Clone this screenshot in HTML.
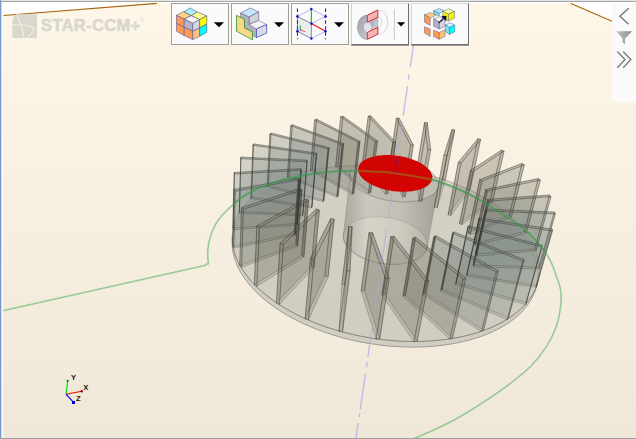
<!DOCTYPE html>
<html><head><meta charset="utf-8"><title>STAR-CCM+ scene</title>
<style>
html,body{margin:0;padding:0;background:#fff;}
body{width:636px;height:439px;overflow:hidden;font-family:"Liberation Sans",sans-serif;}
#scene{position:relative;width:636px;height:439px;overflow:hidden;}
#view{position:absolute;left:0;top:0;}
.b{stroke:none;}
.e{stroke:rgb(40,40,36);stroke-opacity:0.36;stroke-width:0.7;stroke-linejoin:round;}
.e:not(.t){fill:none;}
.e.t{fill-opacity:0.35;}
.e.t.i{fill-opacity:0.45;}
.basebot{fill:rgb(170,170,160);fill-opacity:0.2;stroke:rgb(60,60,60);stroke-opacity:0.5;stroke-width:0.7;}
.baseside{fill:rgb(205,203,192);fill-opacity:0.9;stroke:rgb(90,90,85);stroke-opacity:0.5;stroke-width:0.6;}
.basetop{fill:rgb(175,176,165);fill-opacity:0.35;stroke:rgb(60,60,60);stroke-opacity:0.5;stroke-width:0.7;}
.hubside{fill:url(#hubg);fill-opacity:0.55;stroke:rgb(80,80,80);stroke-opacity:0.3;stroke-width:0.6;}
.hubback{fill:rgb(150,150,140);fill-opacity:0.4;stroke:none;}
.hubbot{fill:none;stroke:rgb(60,60,60);stroke-opacity:0.5;stroke-width:0.7;}
.hubtop{fill:rgb(200,198,190);fill-opacity:0.3;stroke:rgb(80,80,80);stroke-opacity:0.4;stroke-width:0.6;}
.red{fill:#d20303;stroke:none;}
.frameL{position:absolute;left:0;top:0;width:1px;height:439px;background:#7b9cc4;border-right:1px solid #c9d6e6;}
.frameL2{position:absolute;left:2px;top:0;width:1px;height:439px;background:#fff;}
.frameT{position:absolute;left:1px;top:0;width:635px;height:1px;background:#e4e4e4;border-bottom:1px solid #a6a6a6;}
.frameT2{position:absolute;left:3px;top:2px;width:633px;height:1px;background:#fff;}
.frameB{position:absolute;left:0;top:438px;width:636px;height:1px;background:#a0a0a0;}
#logotext{position:absolute;left:41px;top:16.3px;-webkit-text-stroke:0.6px #d9d8cf;font-family:"Liberation Sans",sans-serif;font-weight:bold;font-size:16.5px;line-height:19px;color:#d9d8cf;letter-spacing:0.35px;white-space:nowrap;}
#logoreg{position:absolute;left:140px;top:17px;font-family:"Liberation Sans",sans-serif;font-size:6px;line-height:7px;color:#dddcd3;}
.tb{position:absolute;top:3px;width:56px;height:40px;background:#fafafa;}
.tb.flat{border:1px solid #9e9e9e;}
.tb.raised{border-top:1px solid #d4d4d4;border-left:1px solid #d4d4d4;border-right:1px solid #6e6e6e;border-bottom:1px solid #6e6e6e;box-shadow:0 1px 0 #9a9a9a;}
#rpanel{position:absolute;left:612px;top:3px;width:24px;height:99px;background:#fafafa;}

</style></head>
<body>
<div id="scene">
<svg id="view" width="636" height="439" viewBox="0 0 636 439">
<defs>
<linearGradient id="bg" x1="0" y1="0" x2="0" y2="1"><stop offset="0" stop-color="#fef6e6"/><stop offset="1" stop-color="#efe8d9"/></linearGradient>
<linearGradient id="hubg" gradientUnits="userSpaceOnUse" x1="344" y1="0" x2="438" y2="0">
<stop offset="0" stop-color="#9c9b93"/><stop offset="0.25" stop-color="#d8d6cc"/><stop offset="0.6" stop-color="#c9c7bd"/><stop offset="1" stop-color="#8f8e86"/></linearGradient>
<clipPath id="notred"><path clip-rule="evenodd" d="M0,0 H636 V439 H0 Z M432.2,176.1 L432.3,177.0 L432.3,178.0 L432.2,178.9 L432.0,179.8 L431.6,180.8 L431.2,181.6 L430.7,182.5 L430.0,183.3 L429.3,184.2 L428.5,184.9 L427.5,185.7 L426.5,186.4 L425.4,187.1 L424.2,187.7 L422.9,188.3 L421.5,188.9 L420.0,189.4 L418.5,189.9 L416.9,190.3 L415.2,190.6 L413.4,191.0 L411.7,191.2 L409.8,191.4 L407.9,191.6 L406.0,191.7 L404.0,191.7 L402.0,191.7 L400.0,191.7 L398.0,191.6 L396.0,191.4 L393.9,191.2 L391.9,190.9 L389.9,190.5 L387.9,190.2 L385.9,189.7 L383.9,189.2 L382.0,188.7 L380.1,188.1 L378.3,187.5 L376.5,186.8 L374.8,186.1 L373.1,185.4 L371.5,184.6 L370.0,183.8 L368.6,183.0 L367.2,182.1 L366.0,181.2 L364.8,180.3 L363.7,179.4 L362.7,178.5 L361.8,177.5 L360.9,176.5 L360.2,175.6 L359.6,174.6 L359.1,173.6 L358.7,172.6 L358.4,171.7 L358.2,170.7 L358.1,169.8 L358.1,168.8 L358.3,167.9 L358.5,167.0 L358.8,166.1 L359.2,165.2 L359.7,164.4 L360.3,163.5 L361.0,162.8 L361.8,162.0 L362.7,161.3 L363.7,160.6 L364.7,159.9 L365.9,159.3 L367.1,158.7 L368.3,158.2 L369.7,157.7 L371.1,157.2 L372.6,156.8 L374.1,156.4 L375.7,156.1 L377.3,155.8 L379.0,155.5 L380.7,155.4 L382.5,155.2 L384.3,155.1 L386.1,155.1 L387.9,155.1 L389.8,155.1 L391.6,155.2 L393.5,155.3 L395.4,155.5 L397.3,155.7 L399.1,156.0 L401.0,156.3 L402.9,156.7 L404.7,157.1 L406.5,157.6 L408.3,158.1 L410.0,158.6 L411.8,159.2 L413.4,159.8 L415.0,160.4 L416.6,161.1 L418.1,161.8 L419.6,162.6 L421.0,163.3 L422.3,164.1 L423.6,165.0 L424.8,165.8 L425.9,166.7 L427.0,167.6 L427.9,168.5 L428.8,169.4 L429.6,170.3 L430.2,171.3 L430.8,172.2 L431.3,173.2 L431.7,174.2 L432.0,175.1 L432.2,176.1 Z"/></clipPath>
<clipPath id="fanclip"><polygon points="553.0,228.1 535.6,289.4 533.2,295.5 530.0,301.4 525.9,307.1 520.9,312.7 515.1,317.9 508.5,322.8 501.0,327.4 492.7,331.6 483.6,335.4 473.9,338.7 463.5,341.4 452.5,343.7 441.0,345.4 429.1,346.5 416.8,347.0 404.3,346.9 391.6,346.2 378.9,344.8 366.3,342.9 353.8,340.4 341.5,337.4 329.6,333.8 318.1,329.8 307.1,325.3 296.7,320.3 287.0,315.1 277.9,309.4 269.6,303.6 262.1,297.5 255.4,291.2 249.6,284.7 244.6,278.2 240.4,271.7 237.1,265.1 234.7,258.6 233.1,252.2 232.3,245.9 232.3,239.7 233.7,178.4 234.5,172.8 236.0,167.4 238.3,162.2 241.3,157.3 244.9,152.5 249.2,148.1 254.0,143.9 259.4,140.0 265.3,136.3 271.6,133.0 278.4,129.9 285.6,127.2 293.2,124.7 301.1,122.6 309.3,120.7 317.8,119.2 326.5,117.9 335.4,116.9 344.4,116.3 353.7,115.9 363.0,115.8 372.4,116.1 382.0,116.6 391.5,117.4 401.1,118.5 410.6,119.9 420.1,121.5 429.5,123.5 438.8,125.7 448.0,128.1 457.1,130.9 466.0,133.9 474.6,137.2 483.0,140.7 491.1,144.5 498.9,148.5 506.4,152.7 513.5,157.2 520.1,161.8 526.3,166.7 532.0,171.7 537.2,177.0 541.8,182.3 545.7,187.8 549.0,193.5 551.6,199.2 553.5,204.9 554.6,210.8 554.9,216.6 554.4,222.4"/></clipPath>
<clipPath id="redclip"><polygon points="432.2,176.1 432.3,177.0 432.3,178.0 432.2,178.9 432.0,179.8 431.6,180.8 431.2,181.6 430.7,182.5 430.0,183.3 429.3,184.2 428.5,184.9 427.5,185.7 426.5,186.4 425.4,187.1 424.2,187.7 422.9,188.3 421.5,188.9 420.0,189.4 418.5,189.9 416.9,190.3 415.2,190.6 413.4,191.0 411.7,191.2 409.8,191.4 407.9,191.6 406.0,191.7 404.0,191.7 402.0,191.7 400.0,191.7 398.0,191.6 396.0,191.4 393.9,191.2 391.9,190.9 389.9,190.5 387.9,190.2 385.9,189.7 383.9,189.2 382.0,188.7 380.1,188.1 378.3,187.5 376.5,186.8 374.8,186.1 373.1,185.4 371.5,184.6 370.0,183.8 368.6,183.0 367.2,182.1 366.0,181.2 364.8,180.3 363.7,179.4 362.7,178.5 361.8,177.5 360.9,176.5 360.2,175.6 359.6,174.6 359.1,173.6 358.7,172.6 358.4,171.7 358.2,170.7 358.1,169.8 358.1,168.8 358.3,167.9 358.5,167.0 358.8,166.1 359.2,165.2 359.7,164.4 360.3,163.5 361.0,162.8 361.8,162.0 362.7,161.3 363.7,160.6 364.7,159.9 365.9,159.3 367.1,158.7 368.3,158.2 369.7,157.7 371.1,157.2 372.6,156.8 374.1,156.4 375.7,156.1 377.3,155.8 379.0,155.5 380.7,155.4 382.5,155.2 384.3,155.1 386.1,155.1 387.9,155.1 389.8,155.1 391.6,155.2 393.5,155.3 395.4,155.5 397.3,155.7 399.1,156.0 401.0,156.3 402.9,156.7 404.7,157.1 406.5,157.6 408.3,158.1 410.0,158.6 411.8,159.2 413.4,159.8 415.0,160.4 416.6,161.1 418.1,161.8 419.6,162.6 421.0,163.3 422.3,164.1 423.6,165.0 424.8,165.8 425.9,166.7 427.0,167.6 427.9,168.5 428.8,169.4 429.6,170.3 430.2,171.3 430.8,172.2 431.3,173.2 431.7,174.2 432.0,175.1 432.2,176.1"/></clipPath>
</defs>
<rect x="0" y="0" width="636" height="439" fill="#ffffff"/>
<polygon points="3,15.6 157,3 571,3 612,21.5 636,30 636,439 3,439" fill="url(#bg)"/>
<path d="M3.5,15.5 L157,3.4 M571,3.4 L612,21.3" stroke="#a8660f" stroke-width="1.1" fill="none"/>
<g id="fan">
<polygon points="535.3,258.4 536.0,260.7 536.5,263.0 537.0,265.3 537.4,267.7 537.7,270.0 537.8,272.3 537.9,274.6 537.8,276.9 537.7,279.3 537.4,281.6 537.0,283.9 536.5,286.2 535.9,288.5 535.2,290.7 534.3,293.0 533.3,295.2 532.3,297.5 531.0,299.7 529.7,301.8 528.3,304.0 526.7,306.1 525.0,308.2 523.2,310.3 521.3,312.3 519.2,314.3 517.1,316.3 514.8,318.2 512.4,320.1 509.9,321.9 507.2,323.7 504.5,325.4 501.6,327.1 498.7,328.7 495.6,330.2 492.4,331.8 489.1,333.2 485.7,334.6 482.2,335.9 478.6,337.2 474.9,338.3 471.1,339.5 467.3,340.5 463.3,341.5 459.3,342.4 455.2,343.2 451.0,343.9 446.8,344.6 442.4,345.2 438.1,345.7 433.6,346.1 429.2,346.5 424.6,346.7 420.1,346.9 415.4,347.0 410.8,347.0 406.1,346.9 401.4,346.8 396.7,346.5 392.0,346.2 387.3,345.8 382.5,345.3 377.8,344.7 373.1,344.0 368.4,343.3 363.7,342.5 359.0,341.6 354.4,340.6 349.8,339.5 345.2,338.4 340.7,337.2 336.2,335.9 331.8,334.5 327.5,333.1 323.2,331.6 318.9,330.1 314.8,328.5 310.7,326.8 306.7,325.1 302.7,323.3 298.9,321.4 295.1,319.5 291.4,317.6 287.9,315.6 284.4,313.5 281.0,311.4 277.7,309.3 274.5,307.1 271.5,304.9 268.5,302.7 265.7,300.4 262.9,298.2 260.3,295.8 257.8,293.5 255.4,291.1 253.1,288.8 251.0,286.4 248.9,284.0 247.0,281.5 245.2,279.1 243.5,276.7 241.9,274.2 240.5,271.8 239.2,269.4 237.9,266.9 236.9,264.5 235.9,262.1 235.0,259.6 234.3,257.2 233.6,254.8 233.1,252.4 232.7,250.1 232.4,247.7 232.3,245.4 232.2,243.0 232.2,240.7 232.4,238.5 232.6,236.2 233.0,234.0 233.4,231.8 234.0,229.6 234.6,227.5 235.4,225.4 236.2,223.3 237.2,221.2 238.2,219.2 239.3,217.2 240.5,215.3 241.8,213.3 243.2,211.5 244.7,209.6 246.2,207.8 247.8,206.0 249.5,204.3 251.3,202.6 253.1,201.0 255.1,199.4 257.0,197.8 259.1,196.3 261.2,194.8 263.4,193.3 265.7,191.9 268.0,190.6 270.3,189.3 272.8,188.0 275.2,186.8 277.8,185.6 280.4,184.4 283.0,183.3 285.7,182.3 288.4,181.3 291.2,180.3 294.0,179.4 296.9,178.5 299.8,177.7 302.7,176.9 305.7,176.1 308.7,175.4 311.7,174.8 314.8,174.2 317.9,173.6 321.0,173.1 324.2,172.6 327.4,172.2 330.6,171.8 333.8,171.5 337.1,171.2 340.4,170.9 343.7,170.7 347.0,170.6 350.3,170.5 353.7,170.4 357.0,170.4 360.4,170.4 363.8,170.4 367.1,170.5 370.5,170.7 373.9,170.9 377.4,171.1 380.8,171.4 384.2,171.7 387.6,172.1 391.0,172.5 394.4,173.0 397.8,173.5 401.2,174.0 404.6,174.6 408.0,175.2 411.4,175.9 414.7,176.6 418.1,177.3 421.4,178.1 424.8,179.0 428.1,179.8 431.4,180.8 434.7,181.7 437.9,182.7 441.2,183.8 444.4,184.8 447.5,186.0 450.7,187.1 453.8,188.3 456.9,189.6 460.0,190.8 463.0,192.1 466.0,193.5 469.0,194.9 471.9,196.3 474.8,197.8 477.7,199.3 480.5,200.8 483.3,202.4 486.0,204.0 488.6,205.7 491.3,207.3 493.8,209.1 496.3,210.8 498.8,212.6 501.2,214.4 503.6,216.2 505.8,218.1 508.1,220.0 510.2,221.9 512.3,223.9 514.3,225.9 516.3,227.9 518.2,230.0 520.0,232.0 521.7,234.1 523.4,236.2 525.0,238.4 526.5,240.5 527.9,242.7 529.2,244.9 530.4,247.1 531.6,249.4 532.7,251.6 533.6,253.9 534.5,256.1 535.3,258.4" class="basebot"/>
<polygon points="537.5,282.8 536.9,284.7 536.2,286.6 535.5,288.5 534.6,290.4 533.7,292.3 532.6,294.2 531.5,296.1 530.3,297.9 529.0,299.7 527.6,301.5 526.2,303.3 524.6,305.1 523.0,306.8 521.2,308.5 519.4,310.2 517.5,311.8 515.5,313.4 513.4,315.0 511.2,316.6 509.0,318.1 506.6,319.6 504.2,321.0 501.7,322.4 499.1,323.8 496.4,325.1 493.7,326.4 490.9,327.6 488.0,328.8 485.0,329.9 481.9,331.0 478.8,332.1 475.6,333.1 472.4,334.0 469.1,334.9 465.7,335.7 462.2,336.5 458.7,337.3 455.2,337.9 451.6,338.5 447.9,339.1 444.2,339.6 440.4,340.1 436.7,340.4 432.8,340.8 428.9,341.0 425.0,341.2 421.1,341.4 417.1,341.4 413.2,341.5 409.1,341.4 405.1,341.3 401.1,341.1 397.0,340.9 393.0,340.6 388.9,340.3 384.8,339.9 380.7,339.4 376.7,338.9 372.6,338.3 368.6,337.6 364.5,336.9 360.5,336.1 356.5,335.3 352.6,334.4 348.6,333.5 344.7,332.5 340.8,331.5 337.0,330.4 333.2,329.2 329.4,328.0 325.7,326.8 322.0,325.5 318.4,324.1 314.8,322.7 311.3,321.3 307.8,319.8 304.4,318.3 301.1,316.7 297.8,315.1 294.6,313.5 291.4,311.8 288.4,310.1 285.4,308.4 282.4,306.6 279.6,304.8 276.8,303.0 274.1,301.1 271.5,299.2 268.9,297.3 266.5,295.4 264.1,293.4 261.8,291.5 259.6,289.5 257.5,287.5 255.4,285.5 253.5,283.4 251.6,281.4 249.8,279.4 248.1,277.3 246.5,275.2 245.0,273.2 243.5,271.1 242.2,269.0 240.9,266.9 239.8,264.8 238.7,262.8 237.7,260.7 236.8,258.6 235.9,256.5 235.2,254.5 234.5,252.4 234.0,250.4 233.5,248.3 233.1,246.3 232.8,244.3 232.5,242.3 232.4,240.3 232.3,238.3 232.3,236.4 232.2,241.6 232.2,243.5 232.3,245.5 232.4,247.5 232.7,249.5 233.0,251.6 233.4,253.6 233.9,255.6 234.4,257.7 235.1,259.8 235.8,261.8 236.6,263.9 237.5,266.0 238.5,268.1 239.6,270.2 240.8,272.3 242.0,274.4 243.4,276.5 244.8,278.5 246.3,280.6 247.9,282.7 249.6,284.8 251.4,286.8 253.2,288.9 255.2,290.9 257.2,292.9 259.3,294.9 261.5,296.9 263.8,298.9 266.2,300.9 268.6,302.8 271.2,304.7 273.8,306.6 276.5,308.5 279.2,310.3 282.1,312.1 285.0,313.9 288.0,315.6 291.0,317.3 294.2,319.0 297.3,320.7 300.6,322.3 303.9,323.8 307.3,325.3 310.8,326.8 314.3,328.3 317.8,329.7 321.4,331.0 325.1,332.3 328.8,333.6 332.5,334.8 336.3,335.9 340.1,337.0 344.0,338.1 347.9,339.1 351.8,340.0 355.8,340.9 359.8,341.7 363.7,342.5 367.8,343.2 371.8,343.8 375.8,344.4 379.9,345.0 383.9,345.4 388.0,345.8 392.0,346.2 396.1,346.5 400.1,346.7 404.1,346.9 408.1,347.0 412.1,347.0 416.1,347.0 420.0,346.9 423.9,346.8 427.8,346.6 431.7,346.3 435.5,346.0 439.3,345.6 443.0,345.1 446.7,344.6 450.4,344.1 453.9,343.4 457.5,342.8 461.0,342.0 464.4,341.2 467.8,340.4 471.1,339.5 474.3,338.5 477.5,337.5 480.6,336.5 483.6,335.4 486.6,334.2 489.5,333.0 492.3,331.8 495.0,330.5 497.7,329.2 500.3,327.8 502.8,326.4 505.2,325.0 507.5,323.5 509.8,321.9 511.9,320.4 514.0,318.8 516.0,317.2 517.9,315.5 519.8,313.8 521.5,312.1 523.1,310.4 524.7,308.6 526.2,306.8 527.5,305.0 528.8,303.2 530.0,301.3 531.2,299.5 532.2,297.6 533.1,295.7 534.0,293.8 534.8,291.8 535.5,289.9 536.0,287.9" class="baseside"/>
<polygon points="536.7,253.4 537.4,255.7 537.9,258.0 538.4,260.3 538.8,262.6 539.1,264.9 539.3,267.2 539.3,269.5 539.3,271.8 539.1,274.1 538.9,276.4 538.5,278.7 538.0,281.0 537.4,283.3 536.6,285.5 535.8,287.8 534.8,290.0 533.7,292.2 532.5,294.4 531.2,296.6 529.8,298.7 528.2,300.9 526.5,302.9 524.7,305.0 522.8,307.0 520.7,309.0 518.5,310.9 516.2,312.8 513.8,314.7 511.3,316.5 508.7,318.3 505.9,320.0 503.0,321.7 500.1,323.3 497.0,324.8 493.8,326.3 490.5,327.8 487.1,329.2 483.5,330.5 479.9,331.7 476.2,332.9 472.5,334.0 468.6,335.0 464.6,336.0 460.6,336.9 456.4,337.7 452.2,338.4 448.0,339.1 443.6,339.7 439.2,340.2 434.8,340.6 430.3,340.9 425.7,341.2 421.1,341.4 416.5,341.4 411.8,341.5 407.1,341.4 402.4,341.2 397.7,341.0 392.9,340.6 388.2,340.2 383.4,339.7 378.7,339.1 373.9,338.5 369.2,337.7 364.5,336.9 359.8,336.0 355.2,335.0 350.5,334.0 345.9,332.8 341.4,331.6 336.9,330.3 332.5,329.0 328.1,327.6 323.8,326.1 319.5,324.5 315.3,322.9 311.2,321.2 307.2,319.5 303.2,317.7 299.3,315.9 295.5,314.0 291.9,312.0 288.3,310.0 284.8,308.0 281.4,305.9 278.1,303.8 274.9,301.6 271.8,299.5 268.8,297.2 266.0,295.0 263.2,292.7 260.6,290.4 258.0,288.1 255.6,285.7 253.4,283.3 251.2,281.0 249.1,278.6 247.2,276.1 245.4,273.7 243.7,271.3 242.1,268.9 240.7,266.4 239.3,264.0 238.1,261.6 237.0,259.2 236.0,256.7 235.2,254.3 234.4,251.9 233.8,249.5 233.3,247.2 232.9,244.8 232.6,242.5 232.4,240.1 232.3,237.8 232.3,235.5 232.5,233.3 232.7,231.0 233.1,228.8 233.5,226.6 234.1,224.5 234.8,222.3 235.5,220.2 236.4,218.2 237.3,216.1 238.3,214.1 239.5,212.2 240.7,210.2 242.0,208.3 243.4,206.4 244.8,204.6 246.4,202.8 248.0,201.1 249.7,199.3 251.5,197.7 253.3,196.0 255.3,194.4 257.3,192.9 259.3,191.4 261.4,189.9 263.6,188.5 265.9,187.1 268.2,185.7 270.6,184.4 273.0,183.1 275.5,181.9 278.1,180.7 280.6,179.6 283.3,178.5 286.0,177.5 288.7,176.5 291.5,175.5 294.3,174.6 297.2,173.7 300.1,172.9 303.1,172.1 306.0,171.4 309.1,170.7 312.1,170.1 315.2,169.5 318.3,168.9 321.5,168.4 324.6,167.9 327.8,167.5 331.1,167.1 334.3,166.8 337.6,166.5 340.9,166.3 344.2,166.1 347.5,165.9 350.8,165.8 354.2,165.7 357.6,165.7 360.9,165.7 364.3,165.8 367.7,165.9 371.1,166.1 374.6,166.2 378.0,166.5 381.4,166.8 384.8,167.1 388.2,167.5 391.7,167.9 395.1,168.3 398.5,168.8 401.9,169.4 405.3,169.9 408.7,170.6 412.1,171.2 415.5,171.9 418.9,172.7 422.2,173.5 425.6,174.3 428.9,175.2 432.2,176.1 435.5,177.1 438.8,178.1 442.0,179.1 445.2,180.2 448.4,181.3 451.6,182.4 454.8,183.6 457.9,184.9 461.0,186.1 464.0,187.5 467.0,188.8 470.0,190.2 472.9,191.6 475.9,193.1 478.7,194.6 481.5,196.1 484.3,197.7 487.0,199.3 489.7,200.9 492.4,202.6 494.9,204.3 497.5,206.0 499.9,207.8 502.4,209.6 504.7,211.4 507.0,213.3 509.3,215.2 511.4,217.1 513.5,219.1 515.6,221.0 517.5,223.0 519.4,225.1 521.3,227.1 523.0,229.2 524.7,231.3 526.3,233.4 527.8,235.6 529.2,237.8 530.5,239.9 531.8,242.2 532.9,244.4 534.0,246.6 535.0,248.9 535.9,251.1 536.7,253.4" class="basetop"/>
<polygon points="364.5,165.6 388.0,193.8 395.5,142.2 370.7,115.8" class="b" fill="rgb(131,128,115)" fill-opacity="0.264"/>
<polygon points="391.8,167.7 405.2,196.8 413.4,145.1 399.0,118.1" class="b" fill="rgb(131,128,115)" fill-opacity="0.293"/>
<polygon points="385.4,194.2 362.1,165.9 368.2,116.1 392.9,142.5" class="b" fill="rgb(131,128,115)" fill-opacity="0.264"/>
<polygon points="402.5,196.9 389.2,167.7 396.4,118.1 410.6,145.1" class="b" fill="rgb(131,128,115)" fill-opacity="0.293"/>
<polygon points="337.8,166.3 370.7,192.7 377.5,140.9 343.0,116.2" class="b" fill="rgb(131,128,115)" fill-opacity="0.256"/>
<polygon points="368.4,193.3 335.6,166.8 340.7,116.7 375.2,141.5" class="b" fill="rgb(131,128,115)" fill-opacity="0.256"/>
<polygon points="418.9,201.3 416.3,172.3 424.5,122.5 427.8,149.4" class="b" fill="rgb(131,128,115)" fill-opacity="0.246"/>
<polygon points="418.9,172.5 421.7,201.6 430.7,149.7 427.3,122.8" class="b" fill="rgb(131,128,115)" fill-opacity="0.246"/>
<polygon points="312.3,169.8 353.9,193.4 360.1,141.4 316.6,119.2" class="b" fill="rgb(130,129,117)" fill-opacity="0.248"/>
<polygon points="352.0,194.3 310.4,170.6 314.6,119.9 358.1,142.2" class="b" fill="rgb(130,129,117)" fill-opacity="0.248"/>
<polygon points="434.3,207.3 442.6,179.5 452.0,129.5 443.9,155.2" class="b" fill="rgb(131,128,115)" fill-opacity="0.249"/>
<polygon points="445.3,180.0 437.1,207.9 446.8,155.7 454.7,130.0" class="b" fill="rgb(131,128,115)" fill-opacity="0.249"/>
<polygon points="288.9,176.2 338.2,196.0 343.7,143.6 292.3,124.8" class="b" fill="rgb(128,134,126)" fill-opacity="0.221"/>
<polygon points="336.7,197.1 287.4,177.2 290.7,125.7 342.2,144.6" class="b" fill="rgb(128,134,126)" fill-opacity="0.221"/>
<polygon points="448.0,214.8 467.4,189.2 477.9,138.7 458.3,162.3" class="b" fill="rgb(131,128,115)" fill-opacity="0.242"/>
<polygon points="470.0,190.0 450.7,215.7 461.1,163.1 480.6,139.5" class="b" fill="rgb(131,128,115)" fill-opacity="0.242"/>
<polygon points="268.4,185.3 324.0,200.4 329.1,147.6 271.0,133.0" class="b" fill="rgb(126,137,133)" fill-opacity="0.185"/>
<polygon points="323.0,201.7 267.2,186.6 269.8,134.2 328.0,148.8" class="b" fill="rgb(126,137,133)" fill-opacity="0.185"/>
<polygon points="459.4,223.6 489.9,201.3 501.5,150.1 470.4,170.6" class="b" fill="rgb(131,128,115)" fill-opacity="0.221"/>
<polygon points="492.3,202.3 461.9,224.7 473.0,171.7 504.1,151.1" class="b" fill="rgb(131,128,115)" fill-opacity="0.221"/>
<polygon points="251.6,197.2 312.1,206.5 316.7,153.2 253.6,143.9" class="b" fill="rgb(125,138,135)" fill-opacity="0.166"/>
<polygon points="311.6,208.0 250.9,198.6 252.9,145.2 316.2,154.5" class="b" fill="rgb(125,138,135)" fill-opacity="0.166"/>
<polygon points="468.1,233.3 509.2,215.5 522.0,163.5 479.7,179.7" class="b" fill="rgb(131,128,115)" fill-opacity="0.206"/>
<polygon points="511.4,216.8 470.3,234.7 482.0,181.1 524.3,164.8" class="b" fill="rgb(131,128,115)" fill-opacity="0.206"/>
<polygon points="239.4,211.6 302.8,214.3 307.1,160.3 240.9,157.1" class="b" fill="rgb(125,138,135)" fill-opacity="0.163"/>
<polygon points="302.8,215.9 239.3,213.1 240.8,158.6 307.1,161.7" class="b" fill="rgb(125,138,135)" fill-opacity="0.163"/>
<polygon points="473.6,243.7 524.5,231.5 538.3,178.6 485.6,189.5" class="b" fill="rgb(131,128,116)" fill-opacity="0.199"/>
<polygon points="526.3,233.1 475.4,245.3 487.5,191.0 540.3,180.1" class="b" fill="rgb(131,128,116)" fill-opacity="0.199"/>
<polygon points="232.8,228.1 296.7,223.4 300.8,168.7 234.1,172.5" class="b" fill="rgb(125,138,135)" fill-opacity="0.168"/>
<polygon points="297.4,225.0 233.3,229.8 234.6,174.0 301.5,170.2" class="b" fill="rgb(125,138,135)" fill-opacity="0.168"/>
<polygon points="475.3,254.3 534.7,249.0 549.4,195.0 487.7,199.4" class="b" fill="rgb(128,133,125)" fill-opacity="0.229"/>
<polygon points="343.4,234.7 343.5,233.7 343.7,232.8 344.0,231.9 344.4,231.0 344.8,230.1 345.3,229.3 345.8,228.4 346.4,227.6 347.1,226.8 347.9,226.0 348.7,225.3 349.5,224.5 350.4,223.9 351.4,223.2 352.4,222.5 353.5,221.9 354.7,221.4 355.8,220.8 357.1,220.3 358.3,219.8 359.6,219.4 361.0,219.0 362.4,218.6 363.8,218.2 365.2,217.9 366.7,217.7 368.2,217.4 369.8,217.2 371.3,217.1 372.9,216.9 374.5,216.8 376.1,216.8 377.7,216.8 379.4,216.8 381.0,216.9 382.7,217.0 384.3,217.1 386.0,217.3 387.7,217.5 389.3,217.7 391.0,218.0 392.6,218.3 394.2,218.7 395.9,219.1 397.5,219.5 399.0,219.9 400.6,220.4 402.2,220.9 403.7,221.5 405.2,222.1 406.6,222.7 408.0,223.3 409.4,224.0 410.8,224.7 412.1,225.4 413.4,226.1 414.6,226.9 415.8,227.7 416.9,228.5 418.0,229.3 419.0,230.2 420.0,231.0 420.9,231.9 421.8,232.8 422.6,233.8 423.4,234.7 424.1,235.6 424.7,236.6 425.2,237.5 425.7,238.5 426.2,239.5 426.5,240.5 426.8,241.4 427.0,242.4 427.2,243.4 427.3,244.4 427.3,245.3 427.2,246.3 427.1,247.2 438.3,186.4 438.4,185.5 438.4,184.6 438.4,183.7 438.3,182.8 438.1,181.9 437.9,181.0 437.6,180.1 437.2,179.2 436.7,178.3 436.1,177.4 435.5,176.5 434.9,175.6 434.1,174.7 433.3,173.9 432.4,173.0 431.5,172.2 430.5,171.3 429.5,170.5 428.4,169.7 427.2,168.9 426.0,168.2 424.8,167.4 423.5,166.7 422.1,166.0 420.7,165.3 419.3,164.7 417.8,164.0 416.3,163.4 414.8,162.8 413.2,162.3 411.6,161.8 410.0,161.3 408.4,160.8 406.7,160.4 405.0,160.0 403.3,159.6 401.6,159.3 399.9,159.0 398.1,158.7 396.4,158.4 394.7,158.2 392.9,158.0 391.2,157.9 389.4,157.8 387.7,157.7 386.0,157.7 384.3,157.7 382.6,157.7 380.9,157.8 379.3,157.9 377.7,158.0 376.1,158.2 374.5,158.4 372.9,158.6 371.4,158.9 369.9,159.2 368.5,159.5 367.1,159.9 365.7,160.2 364.4,160.7 363.1,161.1 361.9,161.6 360.8,162.2 359.6,162.7 358.6,163.3 357.6,163.9 356.6,164.5 355.7,165.2 354.9,165.9 354.1,166.6 353.4,167.3 352.8,168.1 352.2,168.8 351.7,169.6 351.3,170.4 350.9,171.3 350.6,172.1 350.4,173.0 350.3,173.8" class="hubback"/><polygon points="427.2,243.3 427.3,244.6 427.2,245.8 427.1,247.0 426.8,248.2 426.5,249.4 426.0,250.6 425.3,251.7 424.6,252.8 423.8,253.9 422.8,254.9 421.7,255.9 420.6,256.9 419.3,257.8 417.9,258.7 416.4,259.5 414.8,260.2 413.1,260.9 411.4,261.6 409.5,262.1 407.6,262.6 405.6,263.1 403.6,263.5 401.5,263.8 399.3,264.0 397.1,264.2 394.9,264.3 392.6,264.3 390.3,264.2 388.0,264.1 385.7,263.9 383.3,263.6 381.0,263.3 378.7,262.9 376.5,262.4 374.2,261.9 372.0,261.3 369.8,260.6 367.7,259.9 365.6,259.1 363.6,258.3 361.7,257.4 359.8,256.4 358.0,255.4 356.3,254.4 354.7,253.3 353.2,252.2 351.8,251.1 350.4,249.9 349.2,248.7 348.1,247.5 347.1,246.3 346.2,245.0 345.5,243.8 344.8,242.5 344.3,241.3 343.8,240.0 343.5,238.7 343.4,237.5 343.3,236.2 343.3,235.0 343.5,233.8 343.8,232.6 344.2,231.5 344.7,230.3 345.3,229.2 346.0,228.1 346.8,227.1 347.8,226.1 348.8,225.2 349.9,224.2 351.1,223.4 352.4,222.6 353.8,221.8 355.3,221.1 356.8,220.4 358.4,219.8 360.1,219.2 361.8,218.7 363.6,218.3 365.5,217.9 367.4,217.5 369.3,217.3 371.3,217.1 373.4,216.9 375.4,216.8 377.5,216.8 379.6,216.8 381.7,216.9 383.8,217.1 385.9,217.3 388.0,217.5 390.1,217.9 392.2,218.2 394.3,218.7 396.4,219.2 398.4,219.7 400.4,220.3 402.4,221.0 404.3,221.7 406.2,222.5 408.0,223.3 409.8,224.1 411.5,225.0 413.1,226.0 414.7,227.0 416.2,228.0 417.6,229.0 418.9,230.1 420.2,231.2 421.3,232.4 422.4,233.5 423.4,234.7 424.2,235.9 425.0,237.1 425.7,238.4 426.2,239.6 426.6,240.8 427.0,242.1 427.2,243.3" class="hubbot"/>
<polygon points="427.1,247.2 426.9,248.1 426.6,249.0 426.3,249.8 425.9,250.7 425.5,251.5 425.0,252.3 424.4,253.1 423.8,253.9 423.1,254.6 422.4,255.3 421.6,256.1 420.7,256.8 419.8,257.4 418.9,258.1 417.9,258.7 416.8,259.3 415.7,259.8 414.5,260.4 413.3,260.9 412.0,261.3 410.7,261.8 409.4,262.2 408.0,262.5 406.6,262.9 405.1,263.2 403.6,263.4 402.1,263.7 400.6,263.9 399.0,264.0 397.4,264.1 395.8,264.2 394.2,264.3 392.5,264.3 390.9,264.3 389.2,264.2 387.5,264.1 385.9,263.9 384.2,263.8 382.5,263.5 380.8,263.3 379.2,263.0 377.5,262.7 375.9,262.3 374.3,261.9 372.7,261.5 371.1,261.0 369.5,260.5 368.0,260.0 366.5,259.4 365.0,258.9 363.6,258.2 362.2,257.6 360.8,256.9 359.5,256.2 358.2,255.5 356.9,254.8 355.7,254.0 354.6,253.2 353.5,252.4 352.4,251.6 351.4,250.8 350.5,249.9 349.6,249.1 348.7,248.2 348.0,247.3 347.2,246.4 346.6,245.5 346.0,244.6 345.4,243.7 345.0,242.8 344.5,241.9 344.2,241.0 343.9,240.1 343.6,239.2 343.5,238.3 343.3,237.4 343.3,236.5 343.3,235.6 343.4,234.7 350.3,173.8 350.2,174.6 350.2,175.5 350.3,176.3 350.4,177.1 350.6,178.0 350.9,178.8 351.2,179.7 351.6,180.5 352.1,181.4 352.6,182.2 353.2,183.1 353.8,183.9 354.5,184.8 355.3,185.6 356.1,186.4 357.0,187.3 358.0,188.1 359.0,188.9 360.0,189.6 361.2,190.4 362.3,191.2 363.5,191.9 364.8,192.6 366.1,193.3 367.5,194.0 368.9,194.7 370.4,195.3 371.8,195.9 373.4,196.5 374.9,197.1 376.5,197.6 378.1,198.1 379.8,198.6 381.5,199.0 383.2,199.4 384.9,199.8 386.6,200.2 388.3,200.5 390.1,200.8 391.8,201.1 393.6,201.3 395.4,201.5 397.1,201.6 398.9,201.7 400.6,201.8 402.4,201.9 404.1,201.9 405.8,201.9 407.5,201.8 409.2,201.7 410.8,201.6 412.5,201.4 414.0,201.2 415.6,201.0 417.1,200.7 418.6,200.4 420.0,200.1 421.4,199.7 422.8,199.3 424.1,198.9 425.4,198.5 426.6,198.0 427.8,197.5 428.9,196.9 429.9,196.4 430.9,195.8 431.8,195.2 432.7,194.5 433.5,193.9 434.3,193.2 435.0,192.5 435.6,191.8 436.2,191.1 436.7,190.3 437.2,189.6 437.5,188.8 437.8,188.0 438.1,187.2 438.3,186.4" class="hubside"/><polygon points="438.3,182.8 438.4,183.9 438.4,185.1 438.3,186.2 438.1,187.3 437.7,188.4 437.2,189.5 436.6,190.6 435.8,191.6 435.0,192.6 434.0,193.5 432.9,194.4 431.7,195.3 430.3,196.1 428.9,196.9 427.3,197.7 425.7,198.3 423.9,199.0 422.1,199.5 420.2,200.1 418.2,200.5 416.1,200.9 414.0,201.2 411.8,201.5 409.5,201.7 407.2,201.8 404.8,201.9 402.4,201.9 400.0,201.8 397.6,201.7 395.2,201.4 392.7,201.2 390.3,200.8 387.9,200.4 385.5,200.0 383.1,199.4 380.8,198.8 378.5,198.2 376.2,197.5 374.0,196.7 371.9,195.9 369.9,195.1 367.9,194.2 366.0,193.3 364.2,192.3 362.5,191.3 360.9,190.2 359.3,189.1 357.9,188.0 356.6,186.9 355.5,185.8 354.4,184.6 353.5,183.5 352.6,182.3 351.9,181.1 351.3,179.9 350.9,178.7 350.5,177.6 350.3,176.4 350.2,175.3 350.3,174.1 350.4,173.0 350.7,171.9 351.1,170.8 351.6,169.8 352.2,168.8 353.0,167.8 353.8,166.9 354.8,166.0 355.8,165.1 357.0,164.2 358.3,163.5 359.6,162.7 361.0,162.0 362.6,161.4 364.2,160.8 365.8,160.2 367.6,159.7 369.4,159.3 371.3,158.9 373.2,158.5 375.2,158.3 377.2,158.0 379.3,157.9 381.4,157.7 383.6,157.7 385.7,157.7 387.9,157.7 390.1,157.8 392.3,158.0 394.6,158.2 396.8,158.5 399.0,158.8 401.2,159.2 403.4,159.6 405.6,160.1 407.7,160.6 409.8,161.2 411.9,161.9 413.9,162.5 415.9,163.3 417.8,164.0 419.7,164.8 421.5,165.7 423.2,166.6 424.9,167.5 426.5,168.4 428.0,169.4 429.4,170.4 430.7,171.5 432.0,172.6 433.1,173.6 434.1,174.8 435.1,175.9 435.9,177.0 436.6,178.2 437.2,179.3 437.7,180.5 438.1,181.6 438.3,182.8" class="hubtop"/>
<g clip-path="url(#notred)">
<polygon points="389.2,167.7 391.8,167.7 399.0,118.1 396.4,118.1" class="e t" fill="rgb(131,128,115)"/>
<polygon points="362.1,165.9 364.5,165.6 370.7,115.8 368.2,116.1" class="e t" fill="rgb(131,128,115)"/>
<polygon points="416.3,172.3 418.9,172.5 427.3,122.8 424.5,122.5" class="e t" fill="rgb(131,128,115)"/>
<polygon points="335.6,166.8 337.8,166.3 343.0,116.2 340.7,116.7" class="e t" fill="rgb(131,128,115)"/>
<polygon points="442.6,179.5 445.3,180.0 454.7,130.0 452.0,129.5" class="e t" fill="rgb(131,128,115)"/>
<polygon points="310.4,170.6 312.3,169.8 316.6,119.2 314.6,119.9" class="e t" fill="rgb(130,129,117)"/>
<polygon points="364.5,165.6 388.0,193.8 395.5,142.2 370.7,115.8" class="e"/>
<polygon points="391.8,167.7 405.2,196.8 413.4,145.1 399.0,118.1" class="e"/>
<polygon points="385.4,194.2 362.1,165.9 368.2,116.1 392.9,142.5" class="e"/>
<polygon points="402.5,196.9 389.2,167.7 396.4,118.1 410.6,145.1" class="e"/>
<polygon points="337.8,166.3 370.7,192.7 377.5,140.9 343.0,116.2" class="e"/>
<polygon points="368.4,193.3 335.6,166.8 340.7,116.7 375.2,141.5" class="e"/>
<polygon points="418.9,201.3 416.3,172.3 424.5,122.5 427.8,149.4" class="e"/>
<polygon points="418.9,172.5 421.7,201.6 430.7,149.7 427.3,122.8" class="e"/>
<polygon points="287.4,177.2 288.9,176.2 292.3,124.8 290.7,125.7" class="e t" fill="rgb(128,134,126)"/>
<polygon points="312.3,169.8 353.9,193.4 360.1,141.4 316.6,119.2" class="e"/>
<polygon points="352.0,194.3 310.4,170.6 314.6,119.9 358.1,142.2" class="e"/>
<polygon points="434.3,207.3 442.6,179.5 452.0,129.5 443.9,155.2" class="e"/>
<polygon points="445.3,180.0 437.1,207.9 446.8,155.7 454.7,130.0" class="e"/>
<polygon points="368.2,116.1 370.7,115.8 395.5,142.2 392.9,142.5" class="e t" fill="rgb(131,128,115)"/>
<polygon points="396.4,118.1 399.0,118.1 413.4,145.1 410.6,145.1" class="e t" fill="rgb(131,128,115)"/>
<polygon points="340.7,116.7 343.0,116.2 377.5,140.9 375.2,141.5" class="e t" fill="rgb(131,128,115)"/>
<polygon points="424.5,122.5 427.3,122.8 430.7,149.7 427.8,149.4" class="e t" fill="rgb(131,128,115)"/>
<polygon points="288.9,176.2 338.2,196.0 343.7,143.6 292.3,124.8" class="e"/>
<polygon points="336.7,197.1 287.4,177.2 290.7,125.7 342.2,144.6" class="e"/>
<polygon points="388.0,193.8 385.4,194.2 392.9,142.5 395.5,142.2" class="e t i" fill="rgb(114,111,100)" style="fill-opacity:0.46"/>
<polygon points="370.7,192.7 368.4,193.3 375.2,141.5 377.5,140.9" class="e t i" fill="rgb(101,99,89)" style="fill-opacity:0.54"/>
<polygon points="405.2,196.8 402.5,196.9 410.6,145.1 413.4,145.1" class="e t i" fill="rgb(124,121,109)" style="fill-opacity:0.40"/>
<polygon points="314.6,119.9 316.6,119.2 360.1,141.4 358.1,142.2" class="e t" fill="rgb(130,129,117)"/>
<polygon points="353.9,193.4 352.0,194.3 358.1,142.2 360.1,141.4" class="e t i" fill="rgb(87,86,78)" style="fill-opacity:0.63"/>
<polygon points="452.0,129.5 454.7,130.0 446.8,155.7 443.9,155.2" class="e t" fill="rgb(131,128,115)"/>
<polygon points="421.7,201.6 418.9,201.3 427.8,149.4 430.7,149.7" class="e t i" fill="rgb(130,127,114)" style="fill-opacity:0.36"/>
<polygon points="338.2,196.0 336.7,197.1 342.2,144.6 343.7,143.6" class="e t i" fill="rgb(72,75,71)" style="fill-opacity:0.71"/>
<polygon points="290.7,125.7 292.3,124.8 343.7,143.6 342.2,144.6" class="e t" fill="rgb(128,134,126)"/>
<polygon points="437.1,207.9 434.3,207.3 443.9,155.2 446.8,155.7" class="e t i" fill="rgb(131,128,115)" style="fill-opacity:0.35"/>
</g>
<polygon points="432.2,176.1 432.3,177.0 432.3,178.0 432.2,178.9 432.0,179.8 431.6,180.8 431.2,181.6 430.7,182.5 430.0,183.3 429.3,184.2 428.5,184.9 427.5,185.7 426.5,186.4 425.4,187.1 424.2,187.7 422.9,188.3 421.5,188.9 420.0,189.4 418.5,189.9 416.9,190.3 415.2,190.6 413.4,191.0 411.7,191.2 409.8,191.4 407.9,191.6 406.0,191.7 404.0,191.7 402.0,191.7 400.0,191.7 398.0,191.6 396.0,191.4 393.9,191.2 391.9,190.9 389.9,190.5 387.9,190.2 385.9,189.7 383.9,189.2 382.0,188.7 380.1,188.1 378.3,187.5 376.5,186.8 374.8,186.1 373.1,185.4 371.5,184.6 370.0,183.8 368.6,183.0 367.2,182.1 366.0,181.2 364.8,180.3 363.7,179.4 362.7,178.5 361.8,177.5 360.9,176.5 360.2,175.6 359.6,174.6 359.1,173.6 358.7,172.6 358.4,171.7 358.2,170.7 358.1,169.8 358.1,168.8 358.3,167.9 358.5,167.0 358.8,166.1 359.2,165.2 359.7,164.4 360.3,163.5 361.0,162.8 361.8,162.0 362.7,161.3 363.7,160.6 364.7,159.9 365.9,159.3 367.1,158.7 368.3,158.2 369.7,157.7 371.1,157.2 372.6,156.8 374.1,156.4 375.7,156.1 377.3,155.8 379.0,155.5 380.7,155.4 382.5,155.2 384.3,155.1 386.1,155.1 387.9,155.1 389.8,155.1 391.6,155.2 393.5,155.3 395.4,155.5 397.3,155.7 399.1,156.0 401.0,156.3 402.9,156.7 404.7,157.1 406.5,157.6 408.3,158.1 410.0,158.6 411.8,159.2 413.4,159.8 415.0,160.4 416.6,161.1 418.1,161.8 419.6,162.6 421.0,163.3 422.3,164.1 423.6,165.0 424.8,165.8 425.9,166.7 427.0,167.6 427.9,168.5 428.8,169.4 429.6,170.3 430.2,171.3 430.8,172.2 431.3,173.2 431.7,174.2 432.0,175.1 432.2,176.1" class="red"/>
<polygon points="536.1,250.7 476.6,256.1 489.1,201.1 551.0,196.6" class="b" fill="rgb(128,133,125)" fill-opacity="0.229"/>
<polygon points="232.7,246.4 294.2,233.6 298.3,178.2 234.0,189.5" class="b" fill="rgb(126,136,131)" fill-opacity="0.196"/>
<polygon points="295.5,235.2 233.9,248.1 235.2,191.2 299.7,179.7" class="b" fill="rgb(126,136,131)" fill-opacity="0.196"/>
<polygon points="473.1,264.7 538.9,267.2 554.4,212.1 485.6,209.1" class="b" fill="rgb(126,137,132)" fill-opacity="0.187"/>
<polygon points="539.7,269.0 473.7,266.5 486.3,210.8 555.3,213.9" class="b" fill="rgb(126,137,132)" fill-opacity="0.187"/>
<polygon points="239.7,265.6 295.8,244.5 300.0,188.4 241.5,207.7" class="b" fill="rgb(129,131,121)" fill-opacity="0.245"/>
<polygon points="297.7,246.0 241.6,267.3 243.4,209.2 302.0,189.8" class="b" fill="rgb(129,131,121)" fill-opacity="0.245"/>
<polygon points="466.7,274.3 536.2,285.4 552.2,229.2 479.2,218.0" class="b" fill="rgb(125,138,135)" fill-opacity="0.166"/>
<polygon points="536.4,287.3 466.7,276.1 479.2,219.8 552.4,231.0" class="b" fill="rgb(125,138,135)" fill-opacity="0.166"/>
<polygon points="254.3,284.9 301.5,255.6 306.1,198.8 256.9,225.9" class="b" fill="rgb(131,128,115)" fill-opacity="0.254"/>
<polygon points="303.9,256.9 256.8,286.4 259.5,227.3 308.6,200.1" class="b" fill="rgb(131,128,115)" fill-opacity="0.254"/>
<polygon points="456.3,282.6 526.2,302.7 542.2,245.4 468.5,225.8" class="b" fill="rgb(125,138,135)" fill-opacity="0.164"/>
<polygon points="525.7,304.6 455.5,284.4 467.7,227.4 541.7,247.1" class="b" fill="rgb(125,138,135)" fill-opacity="0.164"/>
<polygon points="276.4,303.1 311.3,266.3 316.4,209.0 280.1,243.3" class="b" fill="rgb(131,128,115)" fill-opacity="0.267"/>
<polygon points="314.1,267.4 279.4,304.3 283.3,244.5 319.4,210.1" class="b" fill="rgb(131,128,115)" fill-opacity="0.267"/>
<polygon points="442.2,289.2 508.5,317.9 524.1,259.6 453.8,231.8" class="b" fill="rgb(125,138,134)" fill-opacity="0.173"/>
<polygon points="507.2,319.7 440.7,290.7 452.4,233.3 522.8,261.2" class="b" fill="rgb(125,138,134)" fill-opacity="0.173"/>
<polygon points="305.1,318.9 324.9,276.2 330.8,218.4 310.4,258.6" class="b" fill="rgb(131,128,115)" fill-opacity="0.297"/>
<polygon points="328.1,276.9 308.5,319.7 314.0,259.4 334.2,219.2" class="b" fill="rgb(131,128,115)" fill-opacity="0.297"/>
<polygon points="424.9,293.5 483.6,330.1 498.3,270.9 435.9,235.7" class="b" fill="rgb(127,134,128)" fill-opacity="0.214"/>
<polygon points="481.6,331.5 422.8,294.8 433.7,236.9 496.2,272.2" class="b" fill="rgb(127,134,128)" fill-opacity="0.214"/>
<polygon points="339.0,331.3 341.8,284.6 348.7,226.5 346.3,270.6" class="b" fill="rgb(131,128,115)" fill-opacity="0.305"/>
<polygon points="345.2,284.9 342.6,331.6 350.1,271.0 352.1,226.8" class="b" fill="rgb(131,128,115)" fill-opacity="0.305"/>
<polygon points="405.5,295.3 452.6,338.0 465.9,278.1 415.6,237.2" class="b" fill="rgb(131,128,116)" fill-opacity="0.250"/>
<polygon points="449.9,339.2 402.9,296.2 412.8,238.1 463.1,279.2" class="b" fill="rgb(131,128,116)" fill-opacity="0.250"/>
<polygon points="364.5,290.9 379.7,339.0 389.2,278.3 372.5,232.7" class="b" fill="rgb(131,128,115)" fill-opacity="0.293"/>
<polygon points="385.0,294.4 417.2,341.1 428.7,280.7 394.0,236.2" class="b" fill="rgb(131,128,115)" fill-opacity="0.261"/>
<polygon points="376.1,339.1 361.2,291.0 369.0,232.7 385.5,278.4" class="b" fill="rgb(131,128,115)" fill-opacity="0.293"/>
<polygon points="414.0,341.8 381.9,294.9 390.8,236.7 425.3,281.3" class="b" fill="rgb(131,128,115)" fill-opacity="0.261"/>
<polygon points="341.8,284.6 345.2,284.9 352.1,226.8 348.7,226.5" class="e t i" fill="rgb(131,128,115)" style="fill-opacity:0.35"/>
<polygon points="422.8,294.8 424.9,293.5 435.9,235.7 433.7,236.9" class="e t i" fill="rgb(70,74,70)" style="fill-opacity:0.73"/>
<polygon points="361.2,291.0 364.5,290.9 372.5,232.7 369.0,232.7" class="e t i" fill="rgb(124,122,109)" style="fill-opacity:0.39"/>
<polygon points="402.9,296.2 405.5,295.3 415.6,237.2 412.8,238.1" class="e t i" fill="rgb(90,89,80)" style="fill-opacity:0.61"/>
<polygon points="381.9,294.9 385.0,294.4 394.0,236.2 390.8,236.7" class="e t i" fill="rgb(110,107,96)" style="fill-opacity:0.49"/>
<polygon points="424.9,293.5 483.6,330.1 498.3,270.9 435.9,235.7" class="e"/>
<polygon points="481.6,331.5 422.8,294.8 433.7,236.9 496.2,272.2" class="e"/>
<polygon points="339.0,331.3 341.8,284.6 348.7,226.5 346.3,270.6" class="e"/>
<polygon points="345.2,284.9 342.6,331.6 350.1,271.0 352.1,226.8" class="e"/>
<polygon points="405.5,295.3 452.6,338.0 465.9,278.1 415.6,237.2" class="e"/>
<polygon points="449.9,339.2 402.9,296.2 412.8,238.1 463.1,279.2" class="e"/>
<polygon points="364.5,290.9 379.7,339.0 389.2,278.3 372.5,232.7" class="e"/>
<polygon points="385.0,294.4 417.2,341.1 428.7,280.7 394.0,236.2" class="e"/>
<polygon points="376.1,339.1 361.2,291.0 369.0,232.7 385.5,278.4" class="e"/>
<polygon points="414.0,341.8 381.9,294.9 390.8,236.7 425.3,281.3" class="e"/>
<polygon points="498.3,270.9 496.2,272.2 433.7,236.9 435.9,235.7" class="e t" fill="rgb(127,134,128)"/>
<polygon points="483.6,330.1 481.6,331.5 496.2,272.2 498.3,270.9" class="e t" fill="rgb(127,134,128)"/>
<polygon points="350.1,271.0 346.3,270.6 348.7,226.5 352.1,226.8" class="e t" fill="rgb(131,128,115)"/>
<polygon points="465.9,278.1 463.1,279.2 412.8,238.1 415.6,237.2" class="e t" fill="rgb(131,128,116)"/>
<polygon points="389.2,278.3 385.5,278.4 369.0,232.7 372.5,232.7" class="e t" fill="rgb(131,128,115)"/>
<polygon points="428.7,280.7 425.3,281.3 390.8,236.7 394.0,236.2" class="e t" fill="rgb(131,128,115)"/>
<polygon points="452.6,338.0 449.9,339.2 463.1,279.2 465.9,278.1" class="e t" fill="rgb(131,128,116)"/>
<polygon points="342.6,331.6 339.0,331.3 346.3,270.6 350.1,271.0" class="e t" fill="rgb(131,128,115)"/>
<polygon points="417.2,341.1 414.0,341.8 425.3,281.3 428.7,280.7" class="e t" fill="rgb(131,128,115)"/>
<polygon points="379.7,339.0 376.1,339.1 385.5,278.4 389.2,278.3" class="e t" fill="rgb(131,128,115)"/>
<polygon points="233.3,229.8 232.8,228.1 234.1,172.5 234.6,174.0" class="e t" fill="rgb(125,138,135)"/>
<polygon points="232.8,228.1 296.7,223.4 300.8,168.7 234.1,172.5" class="e"/>
<polygon points="296.7,223.4 297.4,225.0 301.5,170.2 300.8,168.7" class="e t i" fill="rgb(54,59,58)" style="fill-opacity:0.83"/>
<polygon points="297.4,225.0 233.3,229.8 234.6,174.0 301.5,170.2" class="e"/>
<polygon points="234.6,174.0 234.1,172.5 300.8,168.7 301.5,170.2" class="e t" fill="rgb(125,138,135)"/>
<polygon points="239.3,213.1 239.4,211.6 240.9,157.1 240.8,158.6" class="e t" fill="rgb(125,138,135)"/>
<polygon points="239.4,211.6 302.8,214.3 307.1,160.3 240.9,157.1" class="e"/>
<polygon points="302.8,214.3 302.8,215.9 307.1,161.7 307.1,160.3" class="e t i" fill="rgb(50,55,54)" style="fill-opacity:0.85"/>
<polygon points="302.8,215.9 239.3,213.1 240.8,158.6 307.1,161.7" class="e"/>
<polygon points="240.8,158.6 240.9,157.1 307.1,160.3 307.1,161.7" class="e t" fill="rgb(125,138,135)"/>
<polygon points="250.9,198.6 251.6,197.2 253.6,143.9 252.9,145.2" class="e t" fill="rgb(125,138,135)"/>
<polygon points="251.6,197.2 312.1,206.5 316.7,153.2 253.6,143.9" class="e"/>
<polygon points="312.1,206.5 311.6,208.0 316.2,154.5 316.7,153.2" class="e t i" fill="rgb(52,58,56)" style="fill-opacity:0.84"/>
<polygon points="311.6,208.0 250.9,198.6 252.9,145.2 316.2,154.5" class="e"/>
<polygon points="252.9,145.2 253.6,143.9 316.7,153.2 316.2,154.5" class="e t" fill="rgb(125,138,135)"/>
<polygon points="267.2,186.6 268.4,185.3 271.0,133.0 269.8,134.2" class="e t" fill="rgb(126,137,133)"/>
<polygon points="268.4,185.3 324.0,200.4 329.1,147.6 271.0,133.0" class="e"/>
<polygon points="324.0,200.4 323.0,201.7 328.0,148.8 329.1,147.6" class="e t i" fill="rgb(60,65,63)" style="fill-opacity:0.79"/>
<polygon points="323.0,201.7 267.2,186.6 269.8,134.2 328.0,148.8" class="e"/>
<polygon points="269.8,134.2 271.0,133.0 329.1,147.6 328.0,148.8" class="e t" fill="rgb(126,137,133)"/>
<polygon points="467.4,189.2 470.0,190.0 480.6,139.5 477.9,138.7" class="e t" fill="rgb(131,128,115)"/>
<polygon points="470.0,190.0 450.7,215.7 461.1,163.1 480.6,139.5" class="e"/>
<polygon points="450.7,215.7 448.0,214.8 458.3,162.3 461.1,163.1" class="e t i" fill="rgb(127,124,111)" style="fill-opacity:0.38"/>
<polygon points="448.0,214.8 467.4,189.2 477.9,138.7 458.3,162.3" class="e"/>
<polygon points="477.9,138.7 480.6,139.5 461.1,163.1 458.3,162.3" class="e t" fill="rgb(131,128,115)"/>
<polygon points="489.9,201.3 492.3,202.3 504.1,151.1 501.5,150.1" class="e t" fill="rgb(131,128,115)"/>
<polygon points="492.3,202.3 461.9,224.7 473.0,171.7 504.1,151.1" class="e"/>
<polygon points="461.9,224.7 459.4,223.6 470.4,170.6 473.0,171.7" class="e t i" fill="rgb(118,116,104)" style="fill-opacity:0.43"/>
<polygon points="459.4,223.6 489.9,201.3 501.5,150.1 470.4,170.6" class="e"/>
<polygon points="501.5,150.1 504.1,151.1 473.0,171.7 470.4,170.6" class="e t" fill="rgb(131,128,115)"/>
<polygon points="509.2,215.5 511.4,216.8 524.3,164.8 522.0,163.5" class="e t" fill="rgb(131,128,115)"/>
<polygon points="511.4,216.8 470.3,234.7 482.0,181.1 524.3,164.8" class="e"/>
<polygon points="470.3,234.7 468.1,233.3 479.7,179.7 482.0,181.1" class="e t i" fill="rgb(106,104,93)" style="fill-opacity:0.51"/>
<polygon points="468.1,233.3 509.2,215.5 522.0,163.5 479.7,179.7" class="e"/>
<polygon points="522.0,163.5 524.3,164.8 482.0,181.1 479.7,179.7" class="e t" fill="rgb(131,128,115)"/>
<polygon points="524.5,231.5 526.3,233.1 540.3,180.1 538.3,178.6" class="e t" fill="rgb(131,128,116)"/>
<polygon points="526.3,233.1 475.4,245.3 487.5,191.0 540.3,180.1" class="e"/>
<polygon points="475.4,245.3 473.6,243.7 485.6,189.5 487.5,191.0" class="e t i" fill="rgb(91,89,80)" style="fill-opacity:0.60"/>
<polygon points="473.6,243.7 524.5,231.5 538.3,178.6 485.6,189.5" class="e"/>
<polygon points="538.3,178.6 540.3,180.1 487.5,191.0 485.6,189.5" class="e t" fill="rgb(131,128,116)"/>
<polygon points="534.7,249.0 536.1,250.7 551.0,196.6 549.4,195.0" class="e t" fill="rgb(128,133,125)"/>
<polygon points="536.1,250.7 476.6,256.1 489.1,201.1 551.0,196.6" class="e"/>
<polygon points="476.6,256.1 475.3,254.3 487.7,199.4 489.1,201.1" class="e t i" fill="rgb(75,77,72)" style="fill-opacity:0.70"/>
<polygon points="475.3,254.3 534.7,249.0 549.4,195.0 487.7,199.4" class="e"/>
<polygon points="549.4,195.0 551.0,196.6 489.1,201.1 487.7,199.4" class="e t" fill="rgb(128,133,125)"/>
<polygon points="538.9,267.2 539.7,269.0 555.3,213.9 554.4,212.1" class="e t" fill="rgb(126,137,132)"/>
<polygon points="539.7,269.0 473.7,266.5 486.3,210.8 555.3,213.9" class="e"/>
<polygon points="473.7,266.5 473.1,264.7 485.6,209.1 486.3,210.8" class="e t i" fill="rgb(61,66,64)" style="fill-opacity:0.78"/>
<polygon points="473.1,264.7 538.9,267.2 554.4,212.1 485.6,209.1" class="e"/>
<polygon points="554.4,212.1 555.3,213.9 486.3,210.8 485.6,209.1" class="e t" fill="rgb(126,137,132)"/>
<polygon points="536.2,285.4 536.4,287.3 552.4,231.0 552.2,229.2" class="e t" fill="rgb(125,138,135)"/>
<polygon points="536.4,287.3 466.7,276.1 479.2,219.8 552.4,231.0" class="e"/>
<polygon points="466.7,276.1 466.7,274.3 479.2,218.0 479.2,219.8" class="e t i" fill="rgb(52,57,56)" style="fill-opacity:0.84"/>
<polygon points="466.7,274.3 536.2,285.4 552.2,229.2 479.2,218.0" class="e"/>
<polygon points="552.2,229.2 552.4,231.0 479.2,219.8 479.2,218.0" class="e t" fill="rgb(125,138,135)"/>
<polygon points="526.2,302.7 525.7,304.6 541.7,247.1 542.2,245.4" class="e t" fill="rgb(125,138,135)"/>
<polygon points="525.7,304.6 455.5,284.4 467.7,227.4 541.7,247.1" class="e"/>
<polygon points="455.5,284.4 456.3,282.6 468.5,225.8 467.7,227.4" class="e t i" fill="rgb(50,55,54)" style="fill-opacity:0.85"/>
<polygon points="456.3,282.6 526.2,302.7 542.2,245.4 468.5,225.8" class="e"/>
<polygon points="542.2,245.4 541.7,247.1 467.7,227.4 468.5,225.8" class="e t" fill="rgb(125,138,135)"/>
<polygon points="508.5,317.9 507.2,319.7 522.8,261.2 524.1,259.6" class="e t" fill="rgb(125,138,134)"/>
<polygon points="507.2,319.7 440.7,290.7 452.4,233.3 522.8,261.2" class="e"/>
<polygon points="440.7,290.7 442.2,289.2 453.8,231.8 452.4,233.3" class="e t i" fill="rgb(56,61,60)" style="fill-opacity:0.81"/>
<polygon points="442.2,289.2 508.5,317.9 524.1,259.6 453.8,231.8" class="e"/>
<polygon points="524.1,259.6 522.8,261.2 452.4,233.3 453.8,231.8" class="e t" fill="rgb(125,138,134)"/>
<polygon points="308.5,319.7 305.1,318.9 310.4,258.6 314.0,259.4" class="e t" fill="rgb(131,128,115)"/>
<polygon points="305.1,318.9 324.9,276.2 330.8,218.4 310.4,258.6" class="e"/>
<polygon points="324.9,276.2 328.1,276.9 334.2,219.2 330.8,218.4" class="e t i" fill="rgb(128,125,112)" style="fill-opacity:0.37"/>
<polygon points="328.1,276.9 308.5,319.7 314.0,259.4 334.2,219.2" class="e"/>
<polygon points="314.0,259.4 310.4,258.6 330.8,218.4 334.2,219.2" class="e t" fill="rgb(131,128,115)"/>
<polygon points="279.4,304.3 276.4,303.1 280.1,243.3 283.3,244.5" class="e t" fill="rgb(131,128,115)"/>
<polygon points="276.4,303.1 311.3,266.3 316.4,209.0 280.1,243.3" class="e"/>
<polygon points="311.3,266.3 314.1,267.4 319.4,210.1 316.4,209.0" class="e t i" fill="rgb(116,113,102)" style="fill-opacity:0.45"/>
<polygon points="314.1,267.4 279.4,304.3 283.3,244.5 319.4,210.1" class="e"/>
<polygon points="283.3,244.5 280.1,243.3 316.4,209.0 319.4,210.1" class="e t" fill="rgb(131,128,115)"/>
<polygon points="256.8,286.4 254.3,284.9 256.9,225.9 259.5,227.3" class="e t" fill="rgb(131,128,115)"/>
<polygon points="254.3,284.9 301.5,255.6 306.1,198.8 256.9,225.9" class="e"/>
<polygon points="301.5,255.6 303.9,256.9 308.6,200.1 306.1,198.8" class="e t i" fill="rgb(99,97,87)" style="fill-opacity:0.55"/>
<polygon points="303.9,256.9 256.8,286.4 259.5,227.3 308.6,200.1" class="e"/>
<polygon points="259.5,227.3 256.9,225.9 306.1,198.8 308.6,200.1" class="e t" fill="rgb(131,128,115)"/>
<polygon points="241.6,267.3 239.7,265.6 241.5,207.7 243.4,209.2" class="e t" fill="rgb(129,131,121)"/>
<polygon points="239.7,265.6 295.8,244.5 300.0,188.4 241.5,207.7" class="e"/>
<polygon points="295.8,244.5 297.7,246.0 302.0,189.8 300.0,188.4" class="e t i" fill="rgb(80,81,75)" style="fill-opacity:0.67"/>
<polygon points="297.7,246.0 241.6,267.3 243.4,209.2 302.0,189.8" class="e"/>
<polygon points="243.4,209.2 241.5,207.7 300.0,188.4 302.0,189.8" class="e t" fill="rgb(129,131,121)"/>
<polygon points="233.9,248.1 232.7,246.4 234.0,189.5 235.2,191.2" class="e t" fill="rgb(126,136,131)"/>
<polygon points="232.7,246.4 294.2,233.6 298.3,178.2 234.0,189.5" class="e"/>
<polygon points="294.2,233.6 295.5,235.2 299.7,179.7 298.3,178.2" class="e t i" fill="rgb(64,69,66)" style="fill-opacity:0.76"/>
<polygon points="295.5,235.2 233.9,248.1 235.2,191.2 299.7,179.7" class="e"/>
<polygon points="235.2,191.2 234.0,189.5 298.3,178.2 299.7,179.7" class="e t" fill="rgb(126,136,131)"/>
</g>
<path d="M2.7,310.7 L205.5,265.2 L206,264.3 L208.3,263.8 C208.2,261.5 207.4,254.8 207.8,250.2 C208.2,245.6 208.9,241.3 210.5,236.5 C212.1,231.7 213.9,226.5 217.3,221.5 C220.7,216.5 226.4,210.7 231.0,206.4 C235.6,202.1 239.6,198.7 244.6,195.5 C249.6,192.3 255.1,189.8 261.0,187.3 C266.9,184.8 273.9,182.3 280.2,180.5 C286.5,178.7 292.6,177.7 298.9,176.4 C305.1,175.2 311.4,173.8 317.7,173.0 C324.0,172.2 329.8,171.7 336.6,171.3 C343.4,170.9 352.0,170.7 358.3,170.8 C364.6,170.9 368.5,171.3 374.3,171.7 C380.1,172.1 383.5,171.7 393.2,173.0 C402.9,174.3 423.3,177.8 432.3,179.7 C441.3,181.6 442.6,182.9 447.4,184.6 C452.2,186.3 456.4,188.0 461.0,190.1 C465.6,192.2 470.1,194.4 474.7,196.9 C479.3,199.4 483.8,202.4 488.4,205.1 C492.9,207.8 497.4,210.3 502.0,213.3 C506.6,216.3 511.1,219.5 515.7,222.9 C520.3,226.3 524.9,229.5 529.4,233.8 C533.9,238.1 539.4,244.1 543.0,248.9 C546.6,253.7 549.0,257.8 551.3,262.6 C553.6,267.4 555.2,272.9 556.8,277.6 C558.4,282.3 560.2,285.9 560.8,291.0 C561.4,296.1 561.2,302.4 560.4,308.5 C559.6,314.6 558.2,321.3 555.8,327.7 C553.4,334.1 550.4,340.5 546.2,346.9 C542.0,353.3 537.2,359.8 530.8,366.2 C524.4,372.6 515.7,379.3 507.7,385.4 C499.7,391.5 491.0,397.3 482.7,402.7 C474.4,408.1 465.7,413.5 457.7,418.0 C449.7,422.5 441.7,426.3 434.6,429.6 C427.6,432.9 421.2,435.6 415.4,438.0 C409.6,440.4 402.6,443.0 400.0,444.0" fill="none" stroke="#3caa50" stroke-opacity="0.5" stroke-width="1.6"/>
<path d="M2.7,310.7 L205.5,265.2 L206,264.3 L208.3,263.8 C208.2,261.5 207.4,254.8 207.8,250.2 C208.2,245.6 208.9,241.3 210.5,236.5 C212.1,231.7 213.9,226.5 217.3,221.5 C220.7,216.5 226.4,210.7 231.0,206.4 C235.6,202.1 239.6,198.7 244.6,195.5 C249.6,192.3 255.1,189.8 261.0,187.3 C266.9,184.8 273.9,182.3 280.2,180.5 C286.5,178.7 292.6,177.7 298.9,176.4 C305.1,175.2 311.4,173.8 317.7,173.0 C324.0,172.2 329.8,171.7 336.6,171.3 C343.4,170.9 352.0,170.7 358.3,170.8 C364.6,170.9 368.5,171.3 374.3,171.7 C380.1,172.1 383.5,171.7 393.2,173.0 C402.9,174.3 423.3,177.8 432.3,179.7 C441.3,181.6 442.6,182.9 447.4,184.6 C452.2,186.3 456.4,188.0 461.0,190.1 C465.6,192.2 470.1,194.4 474.7,196.9 C479.3,199.4 483.8,202.4 488.4,205.1 C492.9,207.8 497.4,210.3 502.0,213.3 C506.6,216.3 511.1,219.5 515.7,222.9 C520.3,226.3 524.9,229.5 529.4,233.8 C533.9,238.1 539.4,244.1 543.0,248.9 C546.6,253.7 549.0,257.8 551.3,262.6 C553.6,267.4 555.2,272.9 556.8,277.6 C558.4,282.3 560.2,285.9 560.8,291.0 C561.4,296.1 561.2,302.4 560.4,308.5 C559.6,314.6 558.2,321.3 555.8,327.7 C553.4,334.1 550.4,340.5 546.2,346.9 C542.0,353.3 537.2,359.8 530.8,366.2 C524.4,372.6 515.7,379.3 507.7,385.4 C499.7,391.5 491.0,397.3 482.7,402.7 C474.4,408.1 465.7,413.5 457.7,418.0 C449.7,422.5 441.7,426.3 434.6,429.6 C427.6,432.9 421.2,435.6 415.4,438.0 C409.6,440.4 402.6,443.0 400.0,444.0" fill="none" stroke="#2f9a45" stroke-opacity="0.45" stroke-width="1.6" clip-path="url(#fanclip)"/>
<path d="M2.7,310.7 L205.5,265.2 L206,264.3 L208.3,263.8 C208.2,261.5 207.4,254.8 207.8,250.2 C208.2,245.6 208.9,241.3 210.5,236.5 C212.1,231.7 213.9,226.5 217.3,221.5 C220.7,216.5 226.4,210.7 231.0,206.4 C235.6,202.1 239.6,198.7 244.6,195.5 C249.6,192.3 255.1,189.8 261.0,187.3 C266.9,184.8 273.9,182.3 280.2,180.5 C286.5,178.7 292.6,177.7 298.9,176.4 C305.1,175.2 311.4,173.8 317.7,173.0 C324.0,172.2 329.8,171.7 336.6,171.3 C343.4,170.9 352.0,170.7 358.3,170.8 C364.6,170.9 368.5,171.3 374.3,171.7 C380.1,172.1 383.5,171.7 393.2,173.0 C402.9,174.3 423.3,177.8 432.3,179.7 C441.3,181.6 442.6,182.9 447.4,184.6 C452.2,186.3 456.4,188.0 461.0,190.1 C465.6,192.2 470.1,194.4 474.7,196.9 C479.3,199.4 483.8,202.4 488.4,205.1 C492.9,207.8 497.4,210.3 502.0,213.3 C506.6,216.3 511.1,219.5 515.7,222.9 C520.3,226.3 524.9,229.5 529.4,233.8 C533.9,238.1 539.4,244.1 543.0,248.9 C546.6,253.7 549.0,257.8 551.3,262.6 C553.6,267.4 555.2,272.9 556.8,277.6 C558.4,282.3 560.2,285.9 560.8,291.0 C561.4,296.1 561.2,302.4 560.4,308.5 C559.6,314.6 558.2,321.3 555.8,327.7 C553.4,334.1 550.4,340.5 546.2,346.9 C542.0,353.3 537.2,359.8 530.8,366.2 C524.4,372.6 515.7,379.3 507.7,385.4 C499.7,391.5 491.0,397.3 482.7,402.7 C474.4,408.1 465.7,413.5 457.7,418.0 C449.7,422.5 441.7,426.3 434.6,429.6 C427.6,432.9 421.2,435.6 415.4,438.0 C409.6,440.4 402.6,443.0 400.0,444.0" fill="none" stroke="#b04812" stroke-width="2.2" clip-path="url(#redclip)"/>
<path d="M414.2,40.0 L410.3,67.0 M409.1,74.6 L408.4,79.7 M407.5,86.0 L403.2,115.5 M369.6,345.0 L367.9,357.0 M367.2,362.0 L366.4,367.0 M365.5,373.4 L360.2,409.4 M359.7,413.0 L359.1,417.0 M358.2,423.0 L355.9,439.0" stroke="#aaa5ee" stroke-opacity="0.7" stroke-width="1.4" fill="none"/><path d="M402.2,122.0 L397.2,156.5 M392.1,191.5 L388.2,218.0 M386.5,229.8 L382.2,259.3 M381.2,265.7 L380.4,271.3 M379.3,279.0 L374.9,309.0 M374.0,315.0 L373.3,320.0 M372.4,326.0 L369.6,345.0" stroke="#aaa5ee" stroke-opacity="0.5" stroke-width="1.2" fill="none"/><path d="M397.2,156.5 L394.8,172.8" stroke="#8a1060" stroke-opacity="0.85" stroke-width="1.2" fill="none"/>
</svg>
<div class="frameT2"></div><div class="frameL"></div><div class="frameL2"></div><div class="frameT"></div><div class="frameB"></div>
<div id="logo">
<svg width="27" height="26" viewBox="0 0 27 26" style="position:absolute;left:11px;top:13px">
<path d="M5.6,1.3 L26,1.3 L26,24.9 L1.2,24.9 L1.2,9.5 Q1.6,3.4 5.6,1.3 Z" fill="#d9d8cf"/>
<path d="M5.2,1.8 Q10.2,8.5 13.0,24.7" fill="none" stroke="#f1ead9" stroke-width="1.3"/>
<path d="M1.5,11.6 Q15,11.0 23.6,15.2 Q21,21.5 16.2,24.7" fill="none" stroke="#f1ead9" stroke-width="1.3"/>
</svg>
<span id="logotext">STAR-CCM+</span><span id="logoreg">&#174;</span>
</div>
<div id="tools">
<div class="tb flat" style="left:171px"></div>
<div class="tb flat" style="left:231px"></div>
<div class="tb flat" style="left:291px"></div>
<div class="tb raised" style="left:351px"></div>
<div class="tb raised" style="left:411px"></div>
<svg id="icons" width="636" height="50" viewBox="0 0 636 50" style="position:absolute;left:0;top:0">
<!-- icon 1 : colour cube -->
<g transform="translate(166,0) scale(0.11382)" stroke="#50508a" stroke-width="5" stroke-linejoin="round">
<polygon points="213,70 152,102 165,135 222,103" fill="#a8f2f8" stroke="none"/>
<polygon points="213,70 275,105 222,138 160,103" fill="#a8f2f8"/>
<polygon points="152,102 92,135 160,168 222,138" fill="#ffd27a"/>
<polygon points="275,105 358,140 296,172 222,138" fill="#ffff8c"/>
<polygon points="222,138 296,172 235,205 160,168" fill="#f4f4f4"/>
<polygon points="92,135 160,168 160,240 92,205" fill="#ff9a52"/>
<polygon points="160,168 235,205 235,275 160,240" fill="#b4b4c6"/>
<polygon points="92,205 160,240 160,312 92,275" fill="#ff9a52"/>
<polygon points="160,240 235,275 235,348 160,312" fill="#ff9a52"/>
<polygon points="235,205 296,172 296,245 235,275" fill="#d6d6de"/>
<polygon points="296,172 358,140 358,212 296,245" fill="#ffff00"/>
<polygon points="235,275 296,245 296,318 235,348" fill="#ffc27a"/>
<polygon points="296,245 358,212 358,285 296,318" fill="#00ffff"/>
<polygon points="420,195 510,195 465,240" fill="#000" stroke="none"/>
</g>
<!-- icon 2 : stepped solid -->
<g transform="translate(228,0) scale(0.11382)" stroke-linejoin="round">
<polygon points="110,115 195,70 270,105 185,150" fill="#c6e6fa" stroke="#50508a" stroke-width="5"/>
<polygon points="185,150 270,105 270,180 185,215" fill="#d2d2da" stroke="#50508a" stroke-width="5"/>
<polygon points="110,115 185,150 185,215 250,255 250,330 215,315 215,280 145,245 145,170 110,150" fill="#b2b2bc" stroke="#606070" stroke-width="4"/>
<polygon points="185,215 270,180 340,215 250,255" fill="#f2f2f2" stroke="#803070" stroke-width="4"/>
<polygon points="250,255 340,215 340,290 250,330" fill="#dadae2" stroke="#2838c8" stroke-width="6"/>
<polygon points="75,135 145,170 145,245 215,280 215,350 75,275" fill="#f8d888" stroke="#0a8a0a" stroke-width="6"/>
<polygon points="405,195 492,195 448,240" fill="#000"/>
</g>
<!-- icon 3 : wire cube with axes -->
<g transform="translate(288,0) scale(0.11382)" stroke-linecap="butt">
<polygon points="83,145 205,207 205,338 83,275" fill="#ececec" stroke="#303060" stroke-width="5"/>
<path d="M205,80 L83,145 M205,80 L330,145 M330,145 L205,207 M330,275 L205,338" fill="none" stroke="#4a4ad8" stroke-width="3.5"/>
<path d="M83,75 L83,345 M330,75 L330,345" fill="none" stroke="#1020c8" stroke-width="9" stroke-dasharray="30 22"/>
<path d="M205,207 L205,80" stroke="#00c400" stroke-width="10"/>
<path d="M205,207 L330,275" stroke="#f01010" stroke-width="11"/>
<path d="M108,262 L108,222" stroke="#00b000" stroke-width="7"/>
<path d="M108,262 L150,278" stroke="#f01010" stroke-width="6"/>
<g fill="#1020c8"><circle cx="205" cy="80" r="11"/><circle cx="83" cy="145" r="12"/><circle cx="330" cy="145" r="12"/><circle cx="205" cy="207" r="11"/><circle cx="83" cy="275" r="12"/><circle cx="330" cy="275" r="12"/><circle cx="205" cy="338" r="11"/><circle cx="108" cy="262" r="6"/></g>
<polygon points="405,195 492,195 448,240" fill="#000"/>
</g>
<!-- icon 4 : sectioned ring -->
<g transform="translate(348,0) scale(0.11382)">
<defs><linearGradient id="ring" x1="0" y1="0" x2="1" y2="1"><stop offset="0" stop-color="#9a9aa6"/><stop offset="1" stop-color="#d6d6dc"/></linearGradient></defs>
<ellipse cx="262" cy="195" rx="88" ry="108" fill="#fbfbfb" stroke="#8888b0" stroke-width="3"/>
<ellipse cx="262" cy="195" rx="36" ry="45" fill="none" stroke="#8888b0" stroke-width="3"/>
<path d="M170,132 A88,108 0 0 0 170,348 L262,300 L262,90 Z" fill="url(#ring)" stroke="#6a6a90" stroke-width="3"/>
<ellipse cx="172" cy="240" rx="38" ry="46" fill="#e2e2e6" stroke="#6a6a90" stroke-width="3"/>
<path d="M225,165 A36,45 0 0 0 225,225" fill="none" stroke="#6a6a90" stroke-width="3"/>
<polygon points="170,135 262,90 262,150 170,195" fill="#f6b4b4" stroke="#e01010" stroke-width="7"/>
<polygon points="170,285 262,240 262,300 170,345" fill="#f6b4b4" stroke="#e01010" stroke-width="7"/>
<path d="M407,80 L407,350" stroke="#8a8a8a" stroke-width="4"/>
<polygon points="430,195 502,195 466,232" fill="#000"/>
</g>
<!-- icon 5 : exploded cube -->
<g transform="translate(408,0) scale(0.11382)" stroke="#50508a" stroke-width="4" stroke-linejoin="round">
<polygon points="225,95 275,75 320,95 275,118" fill="#a8f2f8"/>
<polygon points="225,95 275,118 275,140 225,120" fill="#7ee0ee"/>
<polygon points="145,130 195,110 245,135 195,158" fill="#ffd27a"/>
<polygon points="145,130 195,158 195,222 145,195" fill="#ff9a52"/>
<polygon points="145,235 195,255 195,320 145,290" fill="#ff9a52"/>
<polygon points="305,100 355,78 408,100 355,125" fill="#ffff8c"/>
<polygon points="305,100 355,125 355,185 305,160" fill="#ffff00"/>
<polygon points="355,125 408,100 408,160 355,185" fill="#f4f400"/>
<polygon points="330,218 368,200 410,220 365,242" fill="#c6fbff"/>
<polygon points="330,218 365,242 365,302 330,280" fill="#7ee0ee"/>
<polygon points="365,242 410,220 410,280 365,302" fill="#00ffff"/>
<polygon points="225,165 275,145 325,170 275,195" fill="#f6f6f6"/>
<polygon points="225,165 275,195 275,255 225,230" fill="#b4b4c6"/>
<polygon points="275,195 325,170 325,230 275,255" fill="#d6d6de"/>
<polygon points="225,265 275,285 275,345 225,320" fill="#ff9a52"/>
<polygon points="275,285 325,260 325,320 275,345" fill="#ffc27a"/>
<path d="M268,203 L322,150" stroke="#101040" stroke-width="11" fill="none"/>
<polygon points="292,140 338,138 336,186" fill="#101040" stroke="none"/>
</g>
</svg>
</div>
<div id="rpanel">
<svg width="24" height="99" viewBox="612 3 24 99">
<path d="M628.7,8.3 L619.9,16.3 L628.7,24.3" fill="none" stroke="#7c7c7c" stroke-width="1.5"/>
<defs><linearGradient id="fun" x1="0" y1="0" x2="1" y2="0"><stop offset="0" stop-color="#c4c4c4"/><stop offset="1" stop-color="#8a8a8a"/></linearGradient></defs>
<path d="M616,31.2 L632.2,31.2 L625,38.6 L625,44 L622.6,42.4 L622.6,38.6 Z" fill="url(#fun)"/>
<path d="M617.4,51.4 L625,59.6 L617.4,67.7 M623.2,51.4 L630.8,59.6 L623.2,67.7" fill="none" stroke="#7c7c7c" stroke-width="1.4"/>
</svg>
</div>
<div id="triad">
<svg width="60" height="50" viewBox="40 365 60 50" style="position:absolute;left:40px;top:365px">
<path d="M66,394.2 L67.8,380.6" stroke="#00e000" stroke-width="1.15" fill="none"/>
<path d="M66,394.2 L81.7,391.2" stroke="#f00000" stroke-width="1.15" fill="none"/>
<path d="M66,394.2 L73.5,402.4" stroke="#0000f0" stroke-width="1.15" fill="none"/>
<rect x="72" y="401" width="3" height="3" fill="#0000e0"/>
<circle cx="81.7" cy="391.2" r="1.2" fill="#a00000"/>
<circle cx="67.6" cy="380.8" r="1.1" fill="#008000"/>
<g font-family="Liberation Sans, sans-serif" font-weight="bold" font-size="7.6" fill="#1a1a1a">
<text x="71" y="379.9">Y</text><text x="83.3" y="390.2">X</text><text x="76" y="401.1">Z</text>
</g>
</svg>
</div>

</div>
</body></html>
